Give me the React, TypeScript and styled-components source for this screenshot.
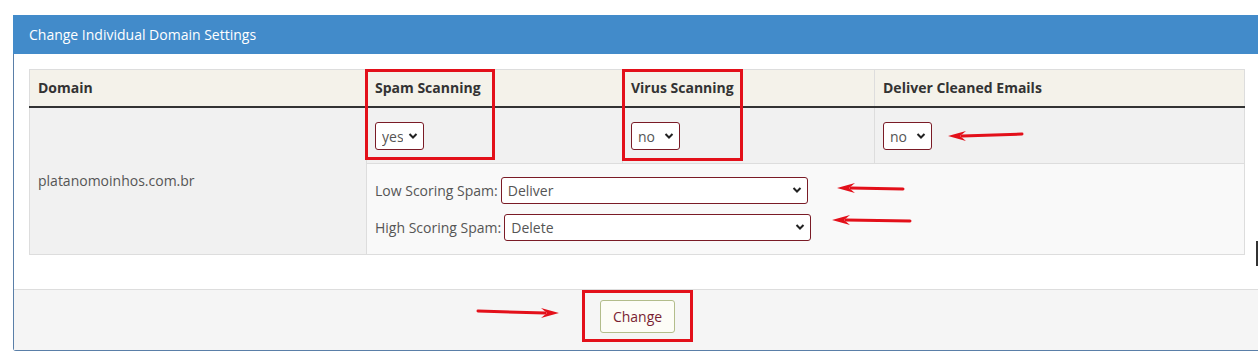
import React from "react";
import styled, { createGlobalStyle } from "styled-components";

const GlobalStyle = createGlobalStyle`
  html, body {
    margin: 0;
    padding: 0;
    background: #fff;
    overflow: hidden;
  }
  body {
    font-family: "Open Sans", "Liberation Sans", sans-serif;
    font-size: 14px;
    color: #555;
  }
`;

const Page = styled.div`
  position: relative;
  width: 1258px;
  height: 357px;
  padding: 15px 0 0 13px;
  box-sizing: border-box;
`;

const Panel = styled.div`
  width: 1250px;
  border: 1px solid #5a7fa8;
  border-top: none;
  border-radius: 0 0 3px 3px;
  background: #fff;
`;

const PanelHeading = styled.div`
  height: 39px;
  background: #428bca;
  color: #fff;
  font-size: 14px;
  display: flex;
  align-items: center;
  padding: 0 16px;
  margin: 0 -1px;
`;

const PanelBody = styled.div`
  padding: 15px 16px 34px 15px;
`;

const Table = styled.table`
  width: 1216px;
  border-collapse: collapse;
  border: 1px solid #ddd;
`;

const Th = styled.th<{ $w?: number }>`
  width: ${(p) => (p.$w ? `${p.$w}px` : "auto")};
  background: #f4f2ea;
  color: #333;
  font-weight: 700;
  font-size: 14px;
  text-align: left;
  height: 37px;
  padding: 0 8px;
  border-left: 1px solid #ddd;
  border-bottom: 2px solid #333;
  box-sizing: border-box;
`;

const Td = styled.td<{ $bg?: string }>`
  background: ${(p) => p.$bg || "#f1f1f1"};
  border-left: 1px solid #ddd;
  border-top: 1px solid #ddd;
  padding: 0 8px;
  vertical-align: middle;
  font-size: 14px;
  color: #555;
`;

const FirstRowTd = styled(Td)`
  height: 53px;
  padding-top: 2px;
  border-top: none;
`;

const DomainTd = styled(Td)`
  border-top: none;
`;

const SubCell = styled(Td)`
  padding: 8px;
`;

const Line = styled.div`
  height: 37px;
  display: flex;
  align-items: center;
  gap: 3px;
  font-size: 14px;
  color: #555;
  white-space: nowrap;
`;

const SelectWrap = styled.span<{ $w: number; $h: number }>`
  position: relative;
  display: inline-block;
  width: ${(p) => p.$w}px;
  height: ${(p) => p.$h}px;
`;

const Select = styled.select`
  appearance: none;
  -webkit-appearance: none;
  width: 100%;
  height: 100%;
  box-sizing: border-box;
  border: 1px solid #7a1b26;
  border-radius: 3px;
  background: #fff;
  font-family: "Open Sans", "Liberation Sans", sans-serif;
  font-size: 14px;
  color: #555;
  padding: 0 20px 0 6px;
  outline: none;
`;

const Chevron = styled.svg`
  position: absolute;
  right: 6px;
  top: 50%;
  margin-top: -4px;
  pointer-events: none;
`;

const PanelFooter = styled.div`
  height: 61px;
  background: #f5f5f5;
  border-top: 1px solid #ddd;
  display: flex;
  justify-content: center;
  align-items: flex-start;
  padding: 10px 3px 0 0;
  box-sizing: border-box;
`;

const Button = styled.button`
  width: 75px;
  height: 33px;
  background: #fdfdf7;
  border: 1px solid #b3bd8b;
  border-radius: 3px;
  color: #7a1f33;
  font-family: "Open Sans", "Liberation Sans", sans-serif;
  font-size: 14px;
`;

const RedBox = styled.div<{ $x: number; $y: number; $w: number; $h: number }>`
  position: absolute;
  left: ${(p) => p.$x}px;
  top: ${(p) => p.$y}px;
  width: ${(p) => p.$w}px;
  height: ${(p) => p.$h}px;
  border: 3px solid #e3101a;
  box-sizing: border-box;
`;

const Arrows = styled.svg`
  position: absolute;
  left: 0;
  top: 0;
  pointer-events: none;
`;

const EdgeMark = styled.div`
  position: absolute;
  right: 0;
  top: 241px;
  width: 2px;
  height: 25px;
  background: #333;
`;

function Dropdown({ value, width, height = 28, options }: { value: string; width: number; height?: number; options: string[] }) {
  return (
    <SelectWrap $w={width} $h={height}>
      <Select defaultValue={value}>
        {options.map((o) => (
          <option key={o}>{o}</option>
        ))}
      </Select>
      <Chevron width="10" height="8" viewBox="0 0 10 8">
        <path d="M1.5 2 L5 5.5 L8.5 2" fill="none" stroke="#222" strokeWidth="2" />
      </Chevron>
    </SelectWrap>
  );
}

function Arrow({ x1, y1, x2, y2 }: { x1: number; y1: number; x2: number; y2: number }) {
  const dir = x2 > x1 ? 1 : -1;
  const head = 14;
  return (
    <g>
      <line x1={x1} y1={y1} x2={x2 - dir * head} y2={y2} stroke="#e3101a" strokeWidth="3" strokeLinecap="round" />
      <polygon
        points={`${x2},${y2} ${x2 - dir * (head + 4)},${y2 - 5} ${x2 - dir * (head - 2)},${y2} ${x2 - dir * (head + 4)},${y2 + 5}`}
        fill="#e3101a"
      />
    </g>
  );
}

const yesNo = ["yes", "no"];
const spamActions = ["Deliver", "Delete", "Tag"];

export default function App() {
  return (
    <>
      <GlobalStyle />
      <Page>
        <Panel>
          <PanelHeading>Change Individual Domain Settings</PanelHeading>
          <PanelBody>
            <Table>
              <thead>
                <tr>
                  <Th $w={337}>Domain</Th>
                  <Th $w={256}>Spam Scanning</Th>
                  <Th $w={252}>Virus Scanning</Th>
                  <Th>Deliver Cleaned Emails</Th>
                </tr>
              </thead>
              <tbody>
                <tr>
                  <DomainTd rowSpan={2}>platanomoinhos.com.br</DomainTd>
                  <FirstRowTd>
                    <Dropdown value="yes" width={49} options={yesNo} />
                  </FirstRowTd>
                  <FirstRowTd>
                    <Dropdown value="no" width={49} options={yesNo} />
                  </FirstRowTd>
                  <FirstRowTd>
                    <Dropdown value="no" width={49} options={yesNo} />
                  </FirstRowTd>
                </tr>
                <tr>
                  <SubCell colSpan={3} $bg="#f9f9f9">
                    <Line>
                      Low Scoring Spam:
                      <Dropdown value="Deliver" width={307} height={27} options={spamActions} />
                    </Line>
                    <Line>
                      High Scoring Spam:
                      <Dropdown value="Delete" width={307} height={27} options={spamActions} />
                    </Line>
                  </SubCell>
                </tr>
              </tbody>
            </Table>
          </PanelBody>
          <PanelFooter>
            <Button>Change</Button>
          </PanelFooter>
        </Panel>

        <RedBox $x={365} $y={69} $w={130} $h={91} />
        <RedBox $x={622} $y={69} $w={121} $h={92} />
        <RedBox $x={582} $y={290} $w={111} $h={52} />
        <Arrows width="1258" height="357" viewBox="0 0 1258 357">
          <Arrow x1={1022} y1={134} x2={948} y2={136} />
          <Arrow x1={903} y1={189} x2={837} y2={188} />
          <Arrow x1={910} y1={221} x2={832} y2={220} />
          <Arrow x1={478} y1={311} x2={559} y2={313} />
        </Arrows>
        <EdgeMark />
      </Page>
    </>
  );
}
